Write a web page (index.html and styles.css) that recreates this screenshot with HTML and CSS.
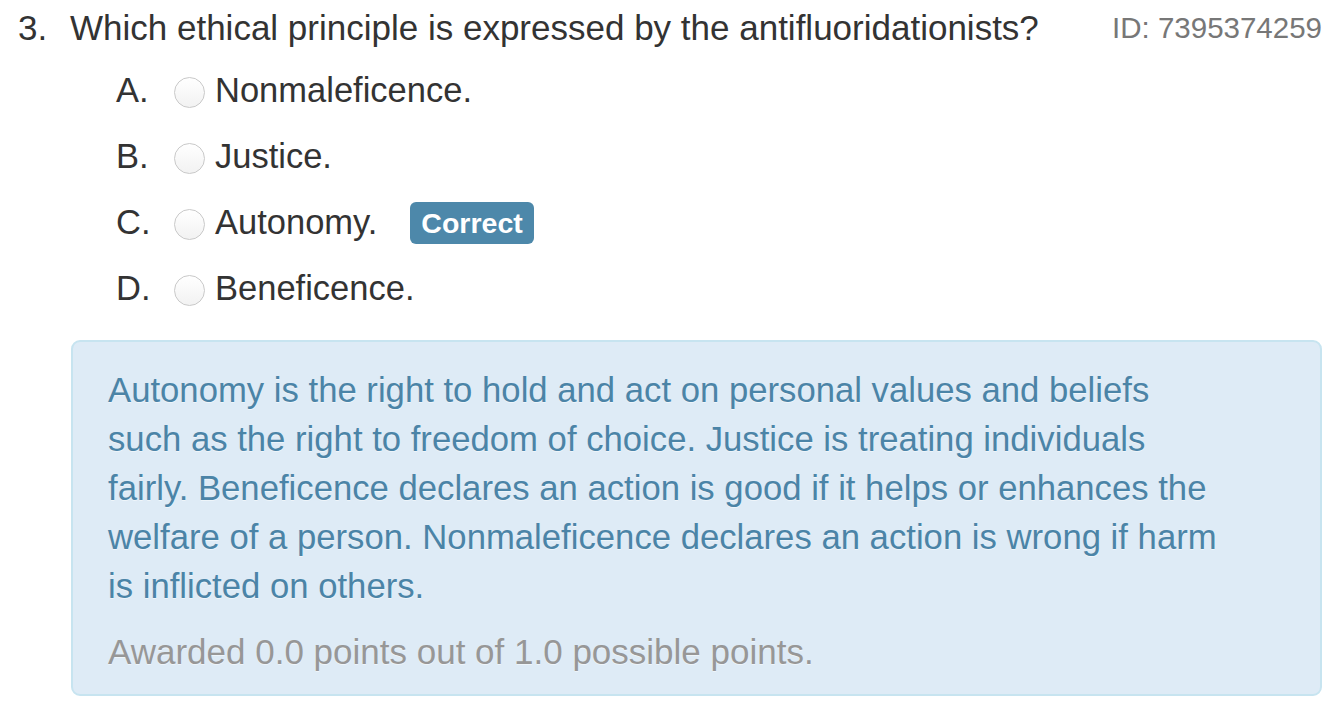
FILE: index.html
```html
<!DOCTYPE html>
<html>
<head>
<meta charset="utf-8">
<link rel="stylesheet" href="styles.css">
</head>
<body>
<div class="question">
  <div class="q-head">
    <span class="q-num">3.</span>
    <span class="q-text">Which ethical principle is expressed by the antifluoridationists?</span>
    <span class="q-id">ID: 7395374259</span>
  </div>
  <ul class="options">
    <li class="option"><span class="opt-letter">A.</span><span class="radio"></span><span class="opt-text">Nonmaleficence.</span></li>
    <li class="option"><span class="opt-letter">B.</span><span class="radio"></span><span class="opt-text">Justice.</span></li>
    <li class="option"><span class="opt-letter">C.</span><span class="radio"></span><span class="opt-text">Autonomy.</span><span class="badge">Correct</span></li>
    <li class="option"><span class="opt-letter">D.</span><span class="radio"></span><span class="opt-text">Beneficence.</span></li>
  </ul>
  <div class="explain">
    <p class="explain-text">Autonomy is the right to hold and act on personal values and beliefs such as the right to freedom of choice. Justice is treating individuals fairly. Beneficence declares an action is good if it helps or enhances the welfare of a person. Nonmaleficence declares an action is wrong if harm is inflicted on others.</p>
    <p class="awarded">Awarded 0.0 points out of 1.0 possible points.</p>
  </div>
</div>
</body>
</html>
```
FILE: styles.css
```css
html, body {
  margin: 0;
  padding: 0;
  background: #ffffff;
}
body {
  font-family: "Liberation Sans", Arial, Helvetica, sans-serif;
  font-size: 35px;
  color: #333333;
}
.question {
  width: 1334px;
}
.q-head {
  display: flex;
  align-items: center;
  height: 56px;
  padding: 0 12px 0 18px;
}
.q-num {
  width: 52px;
  flex: none;
}
.q-text {
  flex: 1;
}
.q-id {
  color: #777777;
  font-size: 29.5px;
}
.options {
  list-style: none;
  margin: 0;
  padding: 1px 0 0 116px;
  font-size: 34.5px;
}
.option {
  display: flex;
  align-items: center;
  height: 66px;
}
.opt-letter {
  width: 58px;
  flex: none;
}
.radio {
  width: 29px;
  height: 29px;
  border-radius: 50%;
  border: 1px solid #c9c9c9;
  background: linear-gradient(#ffffff, #f2f2f2);
  flex: none;
  margin-right: 10px;
  margin-top: 4px;
}
.badge {
  margin-left: 33px;
  background: #4d88aa;
  color: #ffffff;
  font-weight: bold;
  font-size: 28.5px;
  border-radius: 6px;
  padding: 0 11px;
  height: 42px;
  line-height: 42px;
  margin-top: 2px;
}
.explain {
  margin: 19px 12px 0 71px;
  background: #deebf6;
  border: 2px solid #c7e4f0;
  border-radius: 9px;
  padding: 24px 88px 16px 35px;
  height: 312px;
}
.explain p {
  margin: 0;
  line-height: 49px;
  text-shadow: 0 1px 0 rgba(255,255,255,0.5);
}
.explain-text {
  color: #4b84a7;
  font-size: 34.7px;
}
.awarded {
  color: #979797;
  margin-top: 16px !important;
}
```
